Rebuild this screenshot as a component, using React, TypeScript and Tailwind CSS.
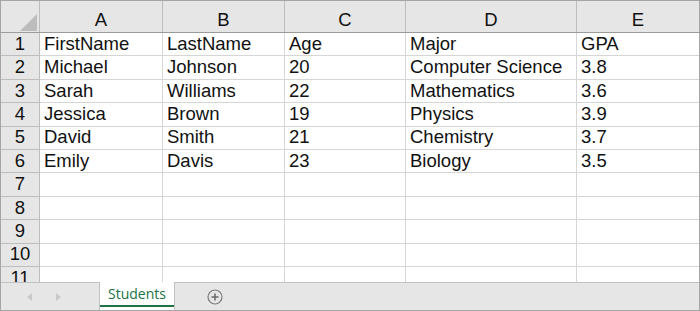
import React from 'react';

const cols = ['A', 'B', 'C', 'D', 'E'];

const rows: string[][] = [
  ['FirstName', 'LastName', 'Age', 'Major', 'GPA'],
  ['Michael', 'Johnson', '20', 'Computer Science', '3.8'],
  ['Sarah', 'Williams', '22', 'Mathematics', '3.6'],
  ['Jessica', 'Brown', '19', 'Physics', '3.9'],
  ['David', 'Smith', '21', 'Chemistry', '3.7'],
  ['Emily', 'Davis', '23', 'Biology', '3.5'],
  ['', '', '', '', ''],
  ['', '', '', '', ''],
  ['', '', '', '', ''],
  ['', '', '', '', ''],
  ['', '', '', '', ''],
];

const gridCols = 'grid grid-cols-[39px_123px_122px_121px_171px_1fr]';

export default function App() {
  return (
    <div
      className="w-[700px] h-[311px] border border-[#a6a6a6] bg-white flex flex-col overflow-hidden text-[#111]"
      style={{ fontFamily: '"Liberation Sans", Arial, sans-serif' }}
    >
      <div className="h-[281px] overflow-hidden">
        {/* column headers */}
        <div className={`${gridCols} h-[32px] bg-[#e6e6e6] border-b border-[#9b9b9b]`}>
          <div className="relative border-r border-[#bdbdbd]">
            <div className="absolute right-[2px] bottom-[1px] w-0 h-0 border-l-[17px] border-l-transparent border-b-[17px] border-b-[#bcbcbc]" />
          </div>
          {cols.map((c, i) => (
            <div
              key={c}
              className={`flex items-end justify-center pb-[3px] text-[18.5px] leading-none ${
                i < cols.length - 1 ? 'border-r border-[#bdbdbd]' : ''
              }`}
            >
              {c}
            </div>
          ))}
        </div>

        {rows.map((r, ri) => (
          <div key={ri} className={`${gridCols} h-[23.4px]`}>
            <div className="bg-[#e6e6e6] border-r border-b border-[#bdbdbd] flex items-end justify-center pb-[2px] text-[18.5px] leading-none">
              {ri + 1}
            </div>
            {r.map((v, ci) => (
              <div
                key={ci}
                className={`border-b border-[#d6d6d6] flex items-end pl-[4px] pb-[2px] text-[18.5px] leading-none whitespace-nowrap ${
                  ci < r.length - 1 ? 'border-r' : ''
                }`}
              >
                {v}
              </div>
            ))}
          </div>
        ))}
      </div>

      {/* sheet tabs */}
      <div className="h-[28px] bg-[#e6e6e6] border-t border-[#c2c2c2] flex items-stretch">
        <div className="w-[98px] flex items-center">
          <svg width="6" height="8" viewBox="0 0 6 8" className="ml-[26px]">
            <path d="M5 0 L0 4 L5 8 Z" fill="#c8c8c8" />
          </svg>
          <svg width="6" height="8" viewBox="0 0 6 8" className="ml-[22px]">
            <path d="M1 0 L6 4 L1 8 Z" fill="#c8c8c8" />
          </svg>
        </div>
        <div className="-mt-px w-[76px] bg-white border-x border-[#c2c2c2] flex flex-col">
          <div
            className="flex-1 flex items-center justify-center text-[14px] text-[#217346]"
            style={{ fontFamily: '"Open Sans", "Liberation Sans", sans-serif' }}
          >
            Students
          </div>
          <div className="h-[2px] bg-[#217346] mb-[3px]" />
        </div>
        <div className="flex items-center ml-[32px]">
          <svg width="16" height="16" viewBox="0 0 16 16">
            <circle cx="8" cy="8" r="7" fill="none" stroke="#7a7a7a" strokeWidth="1.2" />
            <path d="M8 4.5 V11.5 M4.5 8 H11.5" stroke="#6a6a6a" strokeWidth="1.5" />
          </svg>
        </div>
      </div>
    </div>
  );
}
